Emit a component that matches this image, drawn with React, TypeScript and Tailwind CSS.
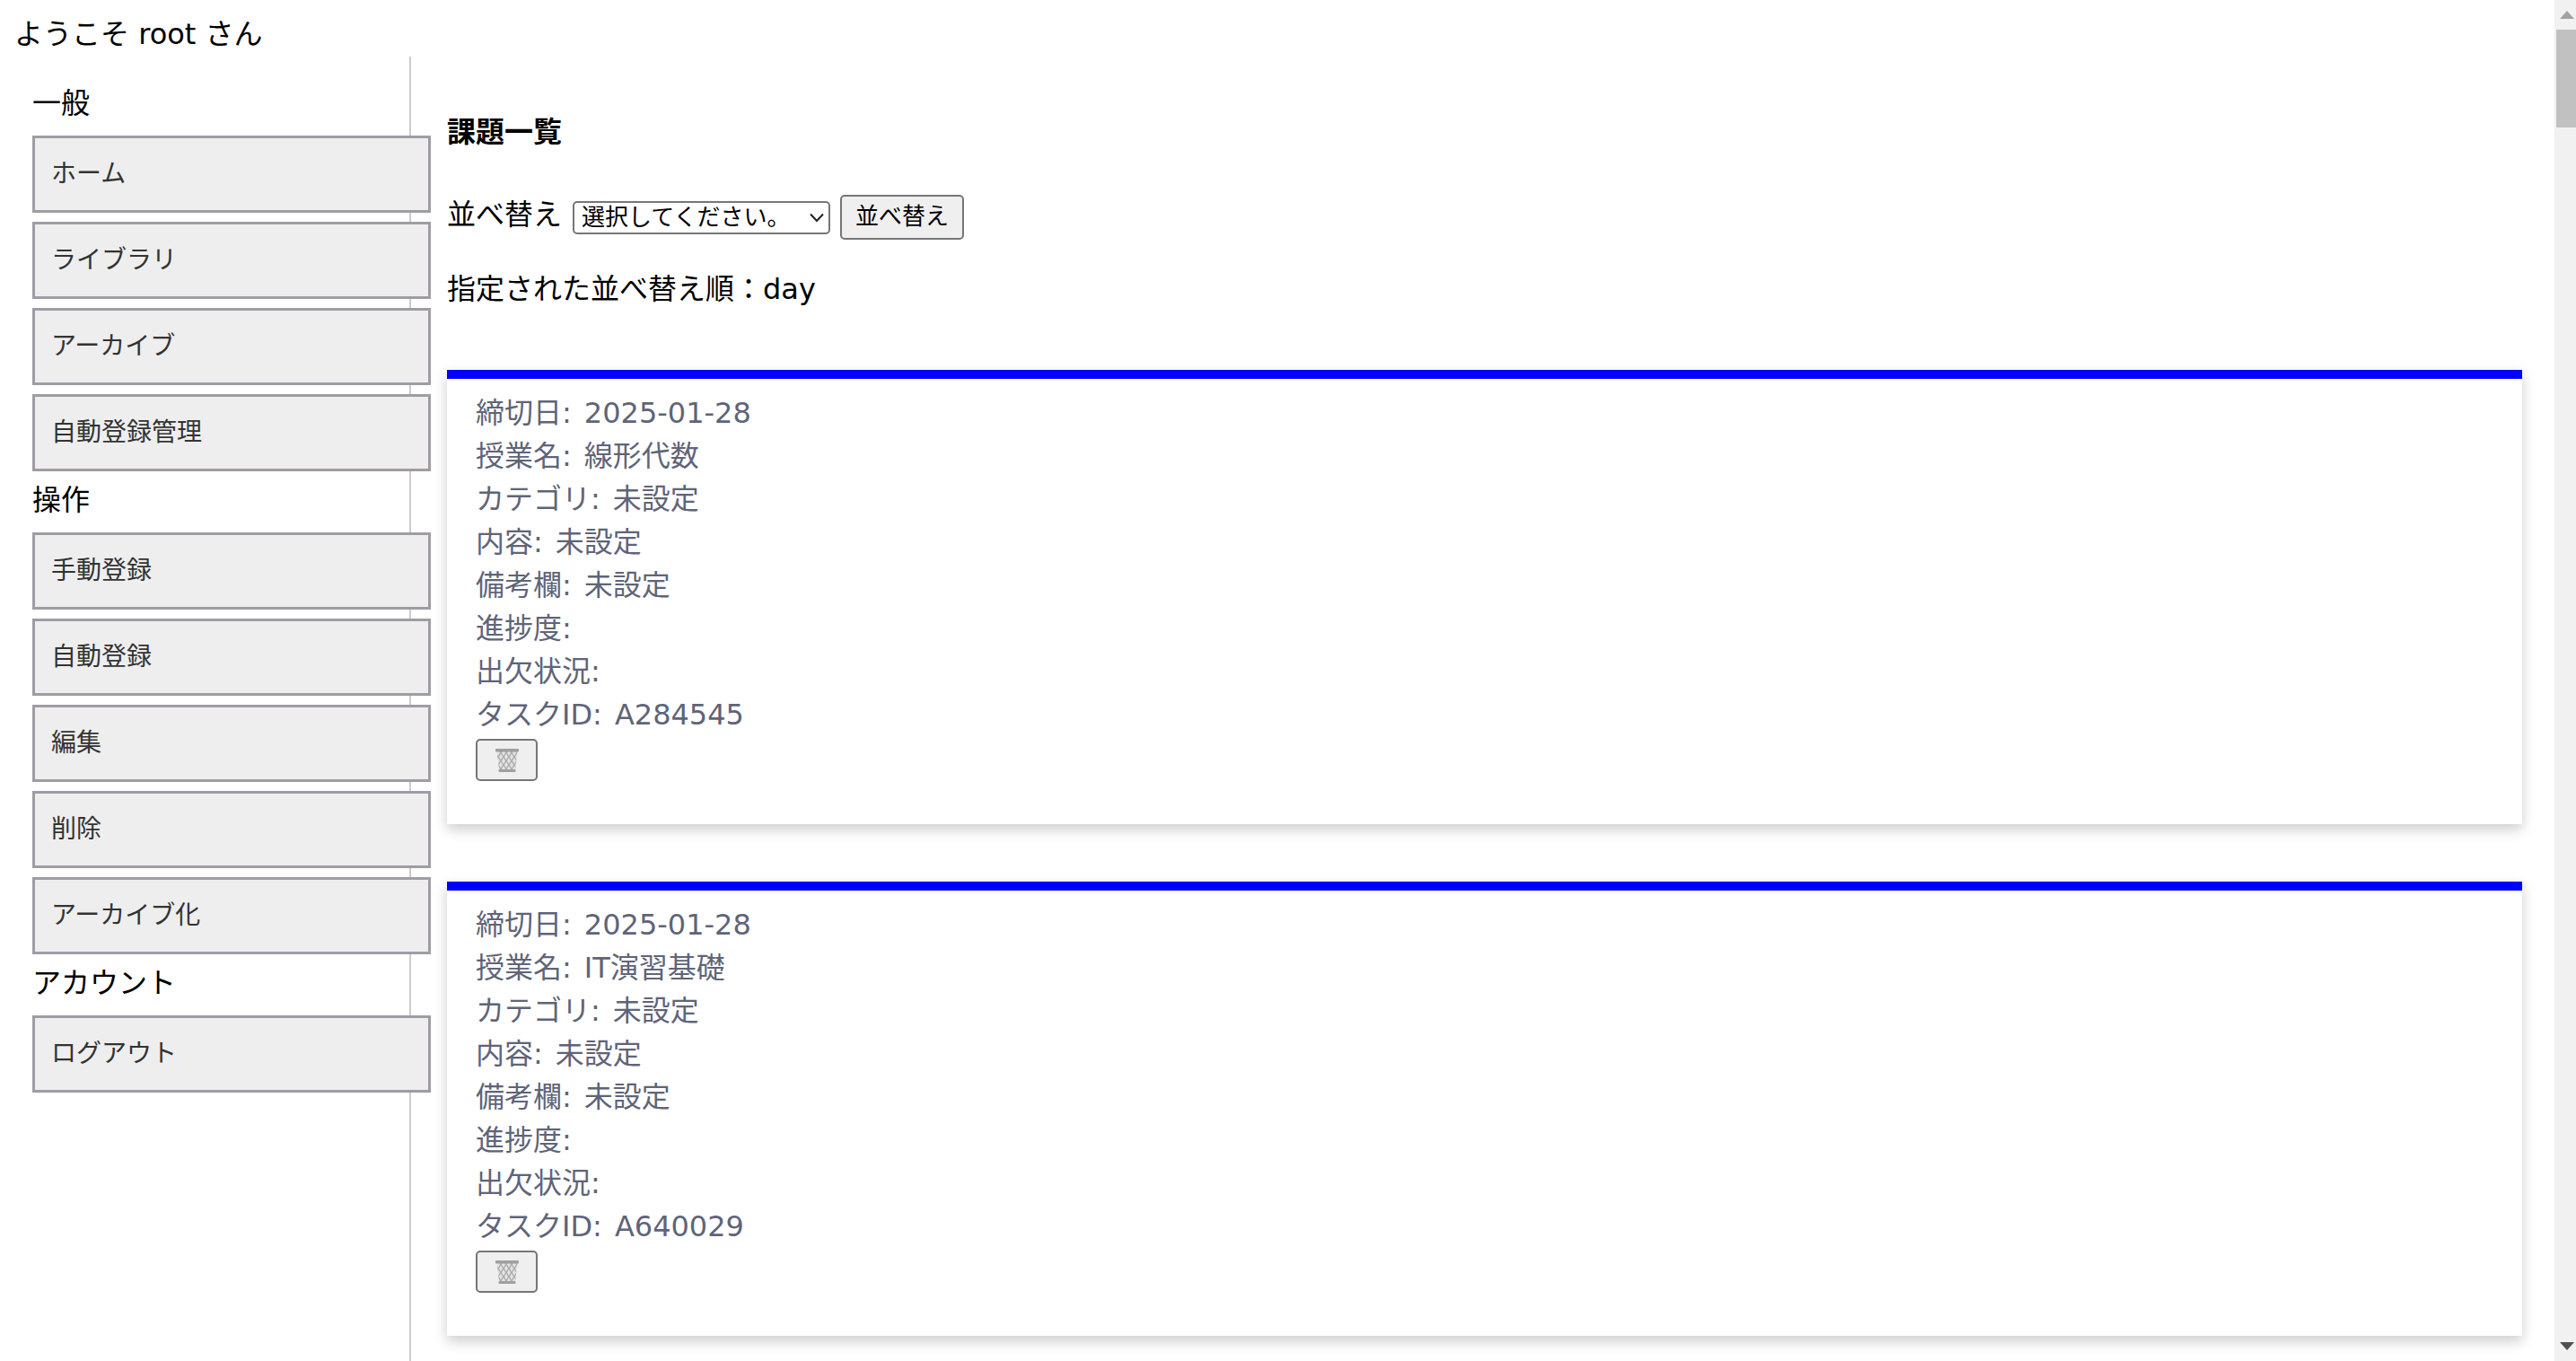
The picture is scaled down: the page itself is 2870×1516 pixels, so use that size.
const navGroups = [
  { title: "一般", items: ["ホーム", "ライブラリ", "アーカイブ", "自動登録管理"] },
  { title: "操作", items: ["手動登録", "自動登録", "編集", "削除", "アーカイブ化"] },
  { title: "アカウント", items: ["ログアウト"] },
];

const tasks = [
  { day: "2025-01-28", name: "線形代数", id: "A284545" },
  { day: "2025-01-28", name: "IT演習基礎", id: "A640029" },
];

function TrashIcon() {
  return (
    <svg width="28" height="28" viewBox="0 0 28 28">
      <defs>
        <pattern id="mesh" x="1" y="1" width="6" height="9" patternUnits="userSpaceOnUse">
          <rect width="6" height="9" fill="#adadad" />
          <path d="M3 1 5 4.5 3 8 1 4.5Z" fill="#e4e4e4" />
          <path d="M0 -3.5 2 0 0 3.5-2 0ZM6 -3.5 8 0 6 3.5 4 0ZM0 5.5 2 9 0 12.5-2 9ZM6 5.5 8 9 6 12.5 4 9Z" fill="#e4e4e4" />
        </pattern>
      </defs>
      <path d="M2.5 3h23L23 25H5Z" fill="url(#mesh)" />
      <rect x="1" y="1" width="26" height="3.5" rx="1" fill="#a0a0a0" />
      <rect x="4.5" y="24" width="19" height="3" rx="1" fill="#a0a0a0" />
    </svg>
  );
}

function TaskCard({ day, name, id }: { day: string; name: string; id: string }) {
  const rows = [
    ["締切日:", day],
    ["授業名:", name],
    ["カテゴリ:", "未設定"],
    ["内容:", "未設定"],
    ["備考欄:", "未設定"],
    ["進捗度:", ""],
    ["出欠状況:", ""],
    ["タスクID:", id],
  ];
  return (
    <div className="border-t-[10px] border-[#0000ff] bg-white px-8 pt-[14px] pb-[48px] shadow-[0_6px_14px_rgba(0,0,0,0.2)]">
      {rows.map(([label, value]) => (
        <div key={label} className="flex h-12 gap-[14px] text-[32px] leading-[48px] text-[#5f6478]">
          <span>{label}</span>
          <span>{value}</span>
        </div>
      ))}
      <button className="mt-[3px] flex h-[47px] w-[69px] items-center justify-center rounded-[5px] border-2 border-[#767676] bg-[#efefef]">
        <TrashIcon />
      </button>
    </div>
  );
}

function Scrollbar() {
  return (
    <div className="flex h-full w-6 shrink-0 flex-col bg-[#f1f1f1]">
      <div className="flex h-[33px] items-center justify-center pl-[4px]">
        <svg width="16" height="9" viewBox="0 0 16 9">
          <path d="M8 0 16 9H0Z" fill="#a3a3a3" />
        </svg>
      </div>
      <div className="ml-[2px] h-[109px] bg-[#c1c1c1]" />
      <div className="flex-1" />
      <div className="flex h-[33px] items-center justify-center pl-[4px]">
        <svg width="16" height="9" viewBox="0 0 16 9">
          <path d="M0 0H16L8 9Z" fill="#505050" />
        </svg>
      </div>
    </div>
  );
}

export default function App() {
  return (
    <div className="flex h-[1516px] w-[2870px] overflow-hidden bg-white font-['DejaVu_Sans','Noto_Sans_CJK_JP',sans-serif] text-black">
      <div className="flex min-w-0 flex-1 flex-col">
        <div className="h-[63px] pl-[16px] text-[32px] leading-[76px]">ようこそ root さん</div>
        <div className="flex min-h-0 flex-1">
          <aside className="w-[458px] shrink-0 border-r-2 border-[#cccccc] pt-[30px] pl-9">
            {navGroups.map((g) => (
              <div key={g.title}>
                <div className="h-[58px] text-[32px] leading-[44px]">{g.title}</div>
                {g.items.map((item) => (
                  <button
                    key={item}
                    className="mb-[10px] block h-[86px] w-[444px] border-[3px] border-[#a09ca4] bg-[#eeeeee] pl-[18px] text-left text-[28px] text-[#333333]"
                  >
                    {item}
                  </button>
                ))}
              </div>
            ))}
          </aside>
          <main className="flex-1 pt-[60px] pr-[36px] pl-10">
            <h3 className="h-12 text-[32px] leading-[48px] font-bold">課題一覧</h3>
            <div className="mt-[46px] flex h-[50px] items-center text-[32px]">
              <span className="-mt-[6px]">並べ替え</span>
              <div className="relative ml-[12px] h-[37px] w-[287px]">
                <select className="block h-full w-full appearance-none rounded-[5px] border-2 border-[#767676] bg-white pl-[8px] text-[26px] leading-[28px]">
                  <option>選択してください。</option>
                </select>
                <svg className="pointer-events-none absolute top-[13px] right-[6px]" width="18" height="11" viewBox="0 0 18 11" fill="none" stroke="#222222" strokeWidth="2">
                  <path d="M2 1.5 9 9l7-7.5" />
                </svg>
              </div>
              <button className="ml-[11px] h-[50px] w-[138px] rounded-[5px] border-2 border-[#767676] bg-[#efefef] pb-[2px] text-[26px]">
                並べ替え
              </button>
            </div>
            <p className="mt-[31px] h-12 text-[32px] leading-[49px]">指定された並べ替え順：day</p>
            <div className="mt-[66px] flex flex-col gap-16">
              {tasks.map((t) => (
                <TaskCard key={t.id} {...t} />
              ))}
            </div>
          </main>
        </div>
      </div>
      <Scrollbar />
    </div>
  );
}
